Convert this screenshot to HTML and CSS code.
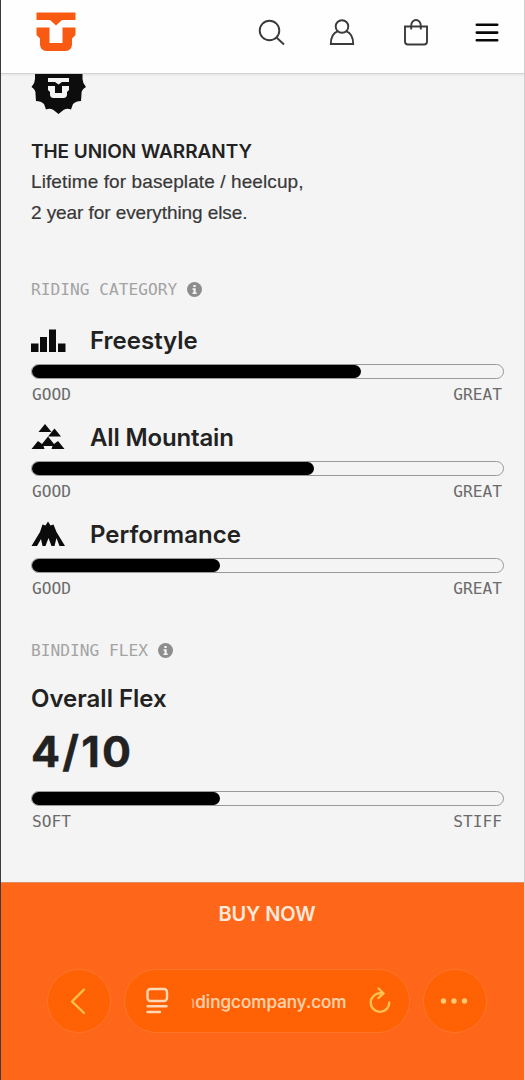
FILE: index.html
```html
<!DOCTYPE html>
<html lang="en">
<head>
<meta charset="utf-8">
<title>Union Binding Company</title>
<link rel="stylesheet" href="styles.css">
</head>
<body>
<div class="screen">
  <header class="header">
    <svg class="logo" width="40" height="40" viewBox="0 0 40 40"><path d="M0.500 0.500H39.500V8H26L20 13.500L14 8H0.500ZM0.500 15.500H13.500V31H26.500V15.500H39.500V23L36 26.500V33Q35 39 29 39H11Q5 39 4 33V26.500L0.500 23Z"/></svg>
    <nav class="nav">
      <svg width="28" height="28" viewBox="0 0 28 28"><circle cx="11.500" cy="11.500" r="9.800"/><path d="M18.500 18.500L26 25.500"/></svg>
      <svg width="26" height="28" viewBox="0 0 26 28"><circle cx="13" cy="7.500" r="6.300"/><path d="M8.800 12.200Q1.800 15 1.800 25H24.200Q24.200 15 17.200 12.200"/></svg>
      <svg width="26" height="28" viewBox="0 0 26 28"><path d="M2 7.500H24V22.500Q24 25.500 21 25.500H5Q2 25.500 2 22.500ZM8.200 10.500V6.500A4.800 5.500 0 0 1 17.800 6.500V10.500"/></svg>
      <svg class="menu" width="26" height="28" viewBox="0 0 26 28"><path d="M2.800 5.800H23.200M2.800 13.600H23.200M2.800 21.300H23.200"/></svg>
    </nav>
  </header>

  <main class="content">
    <section class="warranty">
      <svg class="badge" width="56" height="42" viewBox="0 0 56 42"><path d="M4 0H51.500V5Q51.500 9 55 13Q50 16 50.500 20L50 27Q45 27 42 30L40 35.500Q36 34 32.500 36L27.500 40L22.500 36Q19 34 15 35.500L13 30Q10 27 5 27L4.500 20Q5 16 0.500 13Q4 9 4 5Z"/><path class="mark" d="M17 4H38V8H31L27.500 10.500L24 8H17ZM17 12H24V19H31V12H38V16L36 18V21Q35.500 24 32.500 24H22.500Q19.500 24 19 21V18L17 16Z"/></svg>
      <h2 class="warranty-title">THE UNION WARRANTY</h2>
      <p class="copy">Lifetime for baseplate / heelcup,<br><span class="years">2 year for everything else.</span></p>
    </section>

    <section class="ratings">
      <h3 class="eyebrow"><span>RIDING CATEGORY</span><svg width="15" height="15" viewBox="0 0 15 15"><circle cx="7.500" cy="7.500" r="7.500"/><path d="M6.300 3H8.700V5H6.300ZM5.500 6.300H8.700V10.500H9.700V12H5.500V10.500H6.500V7.700H5.500Z"/></svg></h3>
      <div class="rating">
        <div class="name"><svg width="35" height="28" viewBox="0 0 35 28"><path d="M0 17.500H7.500V26H0ZM9 11H16V26H9ZM18 3.500H25V26H18ZM27 17.500H34.500V26H27Z"/></svg><span>Freestyle</span></div>
        <div class="bar"><div class="fill" style="width:69.800%"></div></div>
        <div class="scale"><span>GOOD</span><span>GREAT</span></div>
      </div>
      <div class="rating">
        <div class="name"><svg width="35" height="28" viewBox="0 0 35 28"><path d="M14 1L20.500 9H7.500ZM23.500 5.500L30 13.500H17ZM17 13.500L23 21L27 18L33.500 26H20.500L21.500 23H12.500L13.500 26H0.500L7 18L11 21Z"/></svg><span class="mountain">All Mountain</span></div>
        <div class="bar"><div class="fill" style="width:59.900%"></div></div>
        <div class="scale"><span>GOOD</span><span>GREAT</span></div>
      </div>
      <div class="rating">
        <div class="name"><svg width="35" height="28" viewBox="0 0 35 28"><path d="M0.500 26L9 12L11.500 4.500L14.500 5.500L17 1.500L19.500 5.500L22.500 4.500L25.500 12L34 26H28.500L25.500 18L23.500 26H20.500L17.500 18L14.500 26H11.500L10 19L6 26Z"/></svg><span>Performance</span></div>
        <div class="bar"><div class="fill" style="width:40%"></div></div>
        <div class="scale"><span>GOOD</span><span>GREAT</span></div>
      </div>
    </section>

    <section class="flex-rating">
      <h3 class="eyebrow"><span>BINDING FLEX</span><svg width="15" height="15" viewBox="0 0 15 15"><circle cx="7.500" cy="7.500" r="7.500"/><path d="M6.300 3H8.700V5H6.300ZM5.500 6.300H8.700V10.500H9.700V12H5.500V10.500H6.500V7.700H5.500Z"/></svg></h3>
      <div class="flex-name">Overall Flex</div>
      <div class="score">4/10</div>
      <div class="bar"><div class="fill" style="width:40%"></div></div>
      <div class="scale"><span>SOFT</span><span>STIFF</span></div>
    </section>
  </main>

  <footer class="footer">
    <div class="buy">BUY NOW</div>
    <div class="browser">
      <div class="round"><svg width="62" height="62" viewBox="0 0 62 62"><path d="M36 19.500L24 31.500L36 43"/></svg></div>
      <div class="address">
        <svg class="page" width="24" height="28" viewBox="0 0 24 28"><rect x="2.500" y="2" width="19.500" height="12" rx="3"/><path d="M2.500 19.200H21.500M2.500 25H15"/></svg>
        <span class="url"><span class="fade">n</span>dingcompany.com</span>
        <svg class="reload" width="24" height="28" viewBox="0 0 24 28"><path d="M14 6.300H12A9.300 9.300 0 1 0 21.300 15.500M10.500 1.500L15.500 6.300L10.500 11"/></svg>
      </div>
      <div class="round"><svg class="dots" width="62" height="62" viewBox="0 0 62 62"><circle cx="19.500" cy="31" r="2.700"/><circle cx="30" cy="31" r="2.700"/><circle cx="40.500" cy="31" r="2.700"/></svg></div>
    </div>
  </footer>
</div>
</body>
</html>
```
FILE: styles.css
```css
* { box-sizing: border-box; }
body { margin: 0; background: #f4f4f4; font-family: Inter, "Liberation Sans", sans-serif; color: #222; }
h2, h3, p { margin: 0; font-weight: inherit; }
svg { display: block; flex: none; }
.screen { width: 525px; height: 1080px; display: flex; flex-direction: column; border-left: 1px solid #3b3a3c; border-right: 1px solid #cfcfcf; background: #f4f4f4; overflow: hidden; white-space: nowrap; }
.header { height: 74px; flex: none; display: flex; justify-content: space-between; padding: 12px 24px 0 35px; background: #fefefe; border-bottom: 1px solid #d2d2d2; box-shadow: 0 1px 2px #e3e3e3; }
.logo { fill: #f95a12; }
.nav { display: flex; gap: 46px; padding-top: 7px; }
.nav svg { fill: none; stroke: #3a3a3a; stroke-width: 1.9; }
.nav svg:first-child { margin-right: -3px; }
.nav svg:nth-child(2) { margin-right: 2px; }
.nav svg:nth-child(3) { margin-right: -1px; }
.nav .menu { stroke: #080808; stroke-width: 2.6; stroke-linecap: round; }
.content { height: 808px; flex: none; padding: 0 20px 0 30px; }
.badge { fill: #0d0d0d; }
.mark { fill: #f4f4f4; }
.warranty-title { margin-top: 21px; line-height: 30px; font-size: 19px; font-weight: 600; letter-spacing: -.05px; }
.copy { font: 19px/30.500px "Liberation Sans", sans-serif; letter-spacing: .1px; color: #383838; -webkit-text-stroke: .2px #383838; }
.years { letter-spacing: -.08px; }
.ratings { margin-top: 49px; }
.eyebrow { display: flex; align-items: center; gap: 10px; height: 24px; font: 16.200px/24px "DejaVu Sans Mono", monospace; color: #a3a3a3; }
.eyebrow span { padding-top: 2px; }
.eyebrow svg { fill: #8d8d8d; }
.eyebrow path { fill: #f4f4f4; }
.rating { height: 97px; }
.ratings .eyebrow { margin-bottom: 24px; }
.name { display: flex; gap: 24px; height: 39px; align-items: flex-start; font-size: 24px; line-height: 32px; font-weight: 600; }
.mountain { letter-spacing: -.15px; }
.name svg { fill: #0b0b0b; margin-top: 1px; }
.bar { height: 15px; width: 473px; border: 1px solid #999; border-radius: 8px; }
.fill { height: 13px; background: #000; border-radius: 7px; }
.scale { display: flex; justify-content: space-between; padding: 6px 2px 0 1px; font: 16.200px/20px "DejaVu Sans Mono", monospace; color: #6b6b6b; }
.flex-rating { margin-top: 22px; }
.flex-name { margin-top: 20px; font-size: 24px; line-height: 33px; font-weight: 600; }
.score { height: 76px; font-size: 43px; line-height: 72px; font-weight: 700; letter-spacing: 2.200px; -webkit-text-stroke: .4px #222; }
.footer { flex: 1; margin-left: -1px; background: #fe671a; border-left: 1px solid #8f1d0c; border-top: 1px solid #e48b64; color: #ffe9db; }
.buy { height: 86px; padding: 15px 0 0 9px; text-align: center; font-size: 20px; line-height: 32px; font-weight: 600; letter-spacing: -.1px; }
.browser { display: flex; gap: 13px; padding-left: 46px; }
.round, .address { height: 64px; border: 1px solid #fe752a; background: #ff6105; border-radius: 32px; }
.round { width: 64px; }
.round svg { fill: none; stroke: #ffc14c; stroke-width: 2.4; stroke-linecap: round; stroke-linejoin: round; }
.round .dots { fill: #ffca70; stroke: none; }
.address { width: 286px; display: flex; align-items: center; padding: 0 17px 0 20px; color: #ffd1ac; }
.page, .reload { fill: none; stroke: #ffd8b5; stroke-width: 2.4; stroke-linecap: round; stroke-linejoin: round; }
.reload { stroke: #ffc150; margin-left: auto; }
.url { margin-left: 16px; font-size: 17.100px; font-weight: 500; -webkit-text-stroke: .2px; }
.fade { color: transparent; background: linear-gradient(90deg, transparent 55%, #ffd1ac99 75%); background-clip: text; -webkit-background-clip: text; }
```
